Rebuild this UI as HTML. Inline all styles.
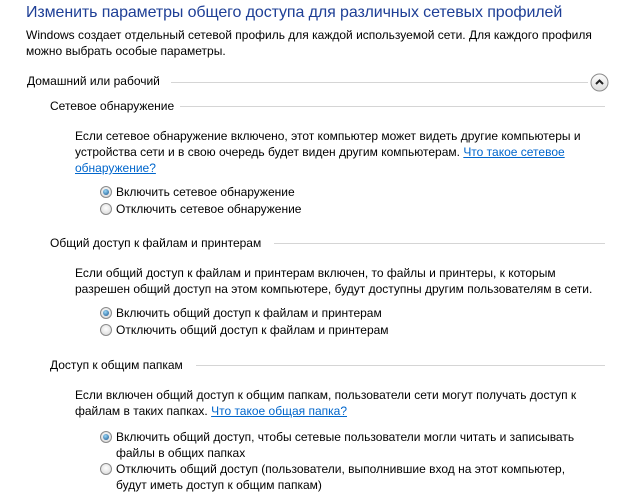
<!DOCTYPE html>
<html><head><meta charset="utf-8"><style>
body{margin:0;width:622px;height:501px;background:#fff;position:relative;overflow:hidden;font-family:"Liberation Sans","DejaVu Sans",sans-serif;font-size:12px;color:#000}
.t{position:absolute;white-space:nowrap;line-height:16px}
.h{color:#1e3f96;font-size:16px;line-height:20px;letter-spacing:-0.1px}
a{color:#0066cc;text-decoration:underline}
.ln{position:absolute;height:1px;background:#d5d5d5}
.r{position:absolute;width:12px;height:12px;border-radius:50%;border:1px solid #8a8a8a;background:radial-gradient(circle at 50% 40%,#fff,#d4d4d4);box-sizing:border-box}
.r.on::after{content:"";position:absolute;left:2px;top:2px;width:6px;height:6px;border-radius:50%;background:radial-gradient(circle at 40% 35%,#9ad8f8,#13508a)}
</style></head><body>
<div class="t h" style="left:26px;top:3px">Изменить параметры общего доступа для различных сетевых профилей</div>
<div class="t" style="left:26px;top:27px">Windows создает отдельный сетевой профиль для каждой используемой сети. Для каждого профиля</div>
<div class="t" style="left:26px;top:43px">можно выбрать особые параметры.</div>

<div class="t" style="left:27px;top:73px">Домашний или рабочий</div>
<div class="ln" style="left:171px;top:82px;width:417px"></div>
<svg style="position:absolute;left:590px;top:73px" width="19" height="19" viewBox="0 0 19 19"><defs><linearGradient id="g" x1="0" y1="0" x2="0" y2="1"><stop offset="0" stop-color="#fdfdfd"/><stop offset="1" stop-color="#dedede"/></linearGradient></defs><circle cx="9.5" cy="9.5" r="8.5" fill="url(#g)" stroke="#8c8c8c"/><path d="M6 11 L9.5 7.5 L13 11" fill="none" stroke="#222" stroke-width="2"/></svg>

<div class="t" style="left:50px;top:98px">Сетевое обнаружение</div>
<div class="ln" style="left:180px;top:106px;width:425px"></div>
<div class="t" style="left:75px;top:128px">Если сетевое обнаружение включено, этот компьютер может видеть другие компьютеры и</div>
<div class="t" style="left:75px;top:144px">устройства сети и в свою очередь будет виден другим компьютерам. <a>Что такое сетевое</a></div>
<div class="t" style="left:75px;top:160px"><a>обнаружение?</a></div>
<div class="r on" style="left:100px;top:186px"></div><div class="t" style="left:116px;top:184px">Включить сетевое обнаружение</div>
<div class="r" style="left:100px;top:203px"></div><div class="t" style="left:116px;top:201px">Отключить сетевое обнаружение</div>

<div class="t" style="left:50px;top:235px">Общий доступ к файлам и принтерам</div>
<div class="ln" style="left:274px;top:243px;width:331px"></div>
<div class="t" style="left:75px;top:265px">Если общий доступ к файлам и принтерам включен, то файлы и принтеры, к которым</div>
<div class="t" style="left:75px;top:281px">разрешен общий доступ на этом компьютере, будут доступны другим пользователям в сети.</div>
<div class="r on" style="left:100px;top:307px"></div><div class="t" style="left:116px;top:305px">Включить общий доступ к файлам и принтерам</div>
<div class="r" style="left:100px;top:324px"></div><div class="t" style="left:116px;top:322px">Отключить общий доступ к файлам и принтерам</div>

<div class="t" style="left:50px;top:357px">Доступ к общим папкам</div>
<div class="ln" style="left:196px;top:365px;width:409px"></div>
<div class="t" style="left:75px;top:387px">Если включен общий доступ к общим папкам, пользователи сети могут получать доступ к</div>
<div class="t" style="left:75px;top:403px">файлам в таких папках. <a>Что такое общая папка?</a></div>
<div class="r on" style="left:100px;top:431px"></div><div class="t" style="left:116px;top:429px">Включить общий доступ, чтобы сетевые пользователи могли читать и записывать</div>
<div class="t" style="left:116px;top:445px">файлы в общих папках</div>
<div class="r" style="left:100px;top:463px"></div><div class="t" style="left:116px;top:461px">Отключить общий доступ (пользователи, выполнившие вход на этот компьютер,</div>
<div class="t" style="left:116px;top:477px">будут иметь доступ к общим папкам)</div>
</body></html>
